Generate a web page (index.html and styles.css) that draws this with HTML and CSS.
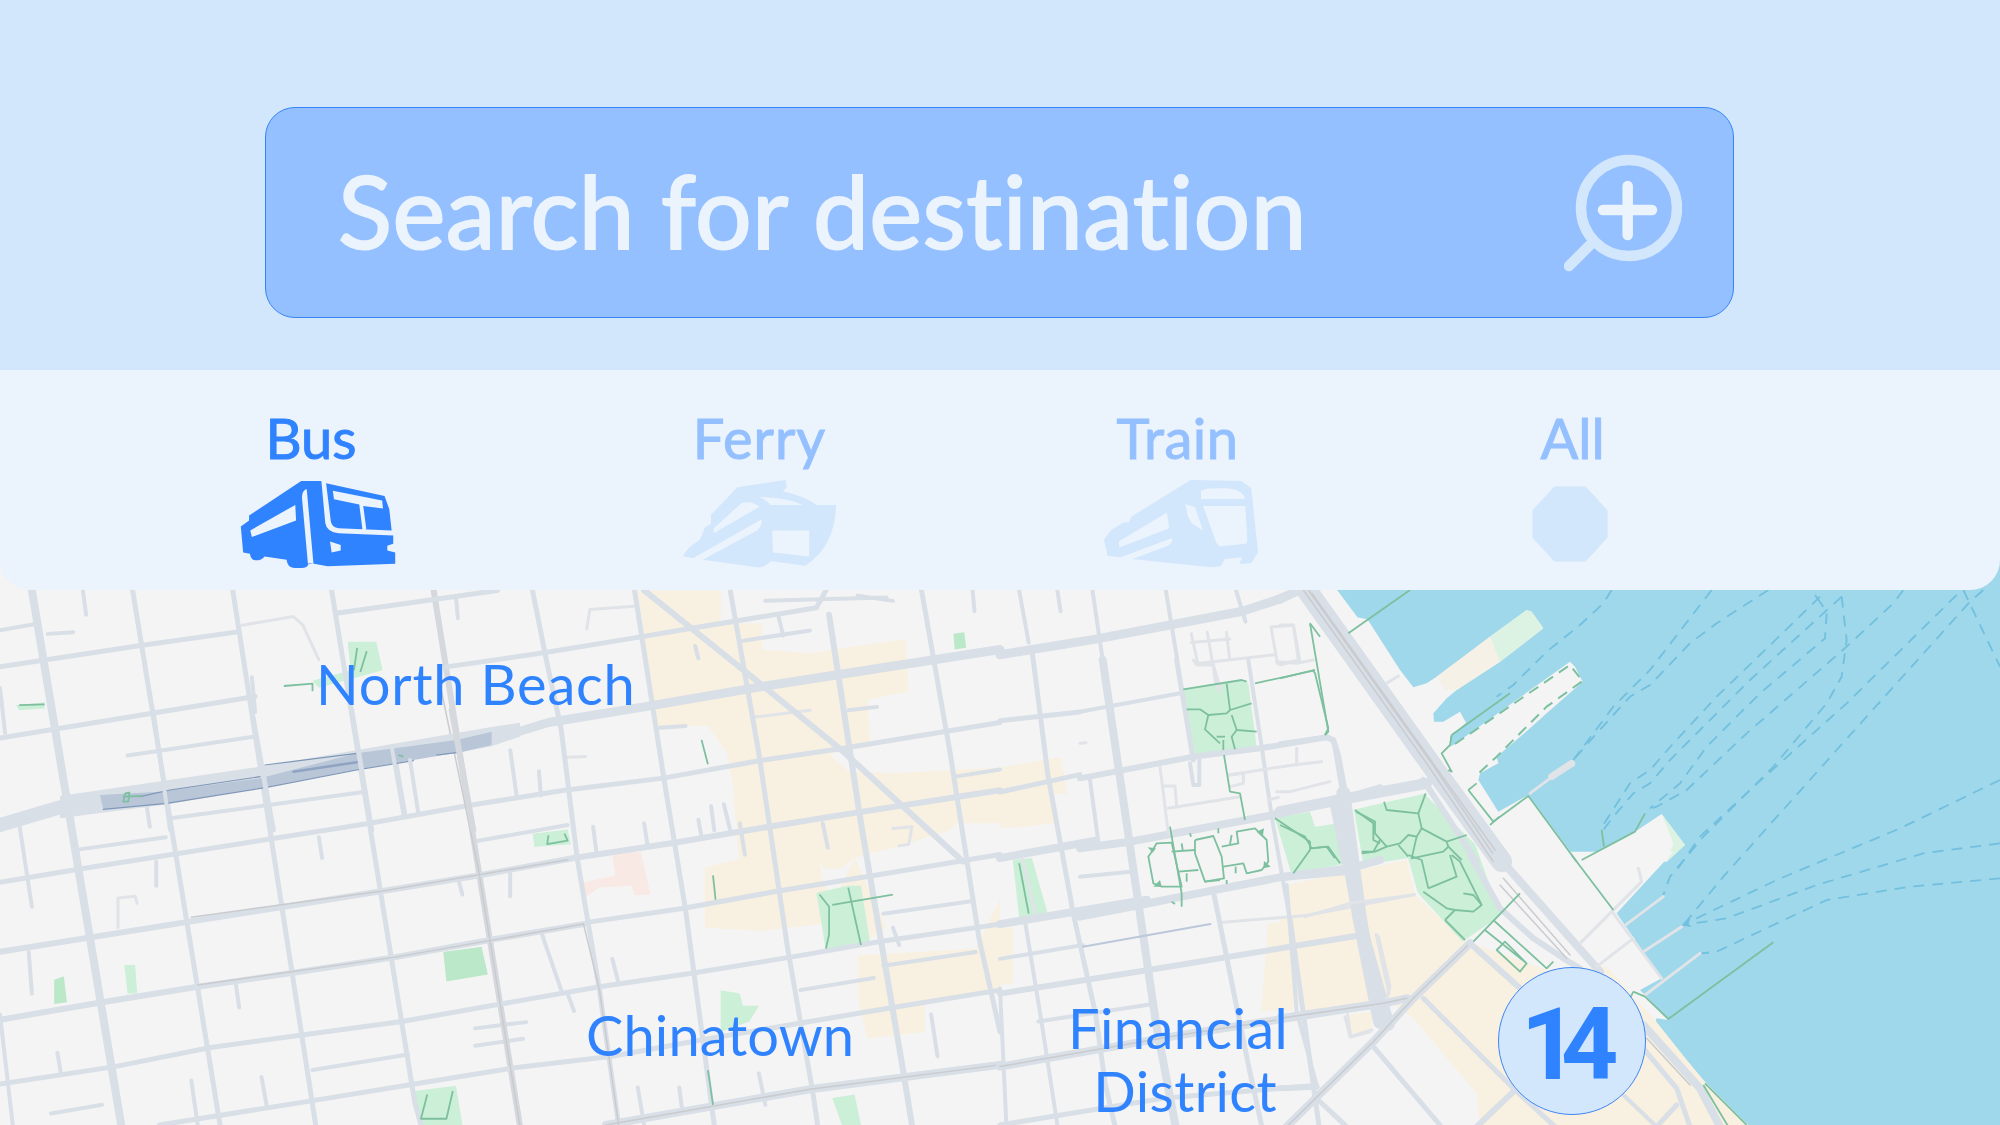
FILE: index.html
```html
<!DOCTYPE html>
<html lang="en">
<head>
<meta charset="utf-8">
<title>Search for destination</title>
<link rel="stylesheet" href="styles.css">
</head>
<body>
<div class="page">
  <header class="top">
    <div class="search">
      <span class="search-text">Search for destination</span>
      <svg class="search-icon" viewBox="1564 150 118 122" width="118" height="122">
        <circle class="lens" cx="1629" cy="206" r="48"/>
        <path class="lens" d="M1590 243L1569 264"/>
        <path class="plus" d="M1627.7 184V233M1603 208H1652"/>
      </svg>
    </div>
  </header>
  <nav class="tabs">
    <div class="tab tab-bus active">
      <span class="tab-label">Bus</span>
      <svg class="tab-icon" width="156" height="88" viewBox="50 240 395 265" preserveAspectRatio="none">
        <path fill-rule="evenodd" d="M205 243H256L266 370Q270 397 300 400L438 407V432L423 438V452L443 458V492L272 500L237 492L224 490Q223 505 205 505H187Q170 503 168 480L112 470Q105 482 90 482Q78 482 75 462L58 458L52 380L73 362V347ZM190 315L192 362L80 412L76 392ZM217 268Q206 275 207 295L222 492H236L219 268ZM278 425L305 436V452L282 458Z"/>
        <path fill-rule="evenodd" d="M268 250L416 288L428 328L434 392L300 385Q283 383 280 365ZM285 272L410 302L412 326L362 318L370 390L360 388L352 314L288 298Z"/>
      </svg>
    </div>
    <div class="tab tab-ferry">
      <span class="tab-label">Ferry</span>
      <svg class="tab-icon" width="153" height="88" viewBox="1172 240 388 265" preserveAspectRatio="none">
        <path fill-rule="evenodd" d="M1310 262L1432 240L1435 262L1425 275Q1480 288 1510 315H1560Q1558 440 1482 498L1395 484Q1380 505 1360 503L1222 480L1360 392Q1372 380 1372 358L1198 475L1172 470Q1180 445 1215 420L1228 382L1243 372V345ZM1250 385L1320 310Q1340 300 1367 320L1250 400ZM1365 292Q1430 290 1475 315H1393Q1385 300 1365 292ZM1398 392H1492V470L1400 458Z"/>
      </svg>
    </div>
    <div class="tab tab-train">
      <span class="tab-label">Train</span>
      <svg class="tab-icon" width="154" height="88" viewBox="113 240 389 265" preserveAspectRatio="none">
        <path fill-rule="evenodd" d="M332 240L460 243L485 265L502 458L485 490L455 493L462 473L418 478L408 500L382 503L185 478L275 438Q287 430 285 415L155 473L122 468L113 420L130 392L162 368L175 368L183 350ZM272 338L278 385L152 443L150 425ZM318 312L343 322L363 392L335 370L325 350ZM358 272Q370 263 420 265Q460 265 470 297H358ZM363 318H470L475 425L472 432L405 440L397 430Z"/>
      </svg>
    </div>
    <div class="tab tab-all">
      <span class="tab-label">All</span>
      <svg class="tab-icon" width="76" height="76" viewBox="0 0 76 76">
        <path class="octagon" d="M23 2H53L74 25V51L53 74H23L2 51V25Z"/>
      </svg>
    </div>
  </nav>
  <main class="map">
    <svg class="map-art" viewBox="0 560 2000 565" width="2000" height="565">
      <rect class="water" x="0" y="560" width="2000" height="565"/>
      <polygon class="land" points="0,560 1317,560 1337,590 1357,617 1400,680 1460,790 1500,860 1500,1125 0,1125"/>
      <g transform="translate(1280 590) scale(.33333)">
        <polygon class="land" points="100,0 170,0 232,82 262,88 270,100 360,240 400,292 440,280 470,260 630,140 740,60 755,65 790,115 660,215 530,300 500,325 460,370 462,395 490,395 540,365 558,398 510,440 510,470 525,462 870,215 885,230 908,275 800,370 750,415 650,500 655,520 600,550 595,570 655,665 745,615 890,810 905,810 1065,725 1145,672 1215,765 1160,815 700,815 0,815 0,0"/>
        <polygon class="pier-tan" points="470,260 630,140 660,215 530,300 495,300"/>
        <polygon class="pier-green" points="630,140 740,60 755,65 790,115 660,215"/>
        <polygon class="pier-green" points="1145,672 1215,765 1160,815 1180,760"/>
      </g>
      <g transform="translate(1280 855) scale(.33333)">
        <polygon class="land" points="500,-10 1180,-10 1010,175 1145,370 1080,405 1095,420 1165,495 1130,490 1125,505 1275,680 1410,815 500,815"/>
        <polygon class="tan" points="20,90 380,15 405,120 550,255 800,345 980,335 1125,495 1280,690 1400,815 600,815 590,715 400,490 330,440 70,470 30,300"/>
        <polygon class="tan" points="0,190 30,190 60,450 0,470"/>
        <polygon class="tan" points="200,480 275,470 275,520 210,545"/>
      </g>
      <g transform="translate(0 580) scale(.63776 .34758)">
        <polygon class="tan" points="1000,30 1130,30 1130,125 1195,125 1195,200 1270,210 1420,170 1425,320 1360,345 1365,480 1300,500 1330,550 1400,555 1568,540 1568,700 1500,700 1490,720 1400,770 1340,800 1320,830 1290,830 1280,760 1170,800 1120,820 1105,830 1105,1000 1190,1010 1290,990 1340,800 1390,1000 1340,1060 1290,860 1280,760 1170,750 1150,600 1140,500 1110,420 1030,420"/>
        <polygon class="tan" points="1345,1080 1530,1060 1568,920 1568,1180 1450,1220 1450,1300 1360,1320 1345,1200"/>
        <polygon class="tan" points="1150,620 1300,560 1340,800 1160,830"/>
        <polygon class="pink" points="960,790 1005,782 1020,905 995,908 990,880 940,885 915,915 915,870 965,850"/>
        <polygon class="park" points="545,178 590,178 600,260 500,310 490,290 550,260"/>
        <polygon class="park-strong" points="695,1070 755,1055 765,1135 700,1155"/>
        <polygon class="park" points="195,1108 212,1108 215,1190 200,1190"/>
        <polygon class="park-strong" points="85,1150 100,1140 105,1215 85,1220"/>
        <polygon class="park" points="25,360 70,352 70,370 30,375"/>
        <polygon class="park-strong" points="1495,155 1512,150 1515,195 1497,200"/>
        <polygon class="park" points="835,730 890,718 895,760 838,768"/>
        <polygon class="park" points="1280,900 1330,880 1350,880 1365,1050 1295,1065"/>
        <polygon class="park" points="1130,1180 1160,1190 1165,1225 1190,1225 1175,1270 1130,1300"/>
        <polygon class="park" points="650,1470 715,1455 725,1568 660,1568"/>
        <polygon class="park" points="1305,1490 1340,1480 1350,1568 1320,1568"/>
      </g>
      <g transform="translate(1000 580) scale(.63776 .34758)">
        <polygon class="tan" points="0,540 95,510 105,615 85,615 85,700 30,712 0,712"/>
        <polygon class="tan" points="420,990 450,980 460,1240 410,1240"/>
        <polygon class="tan" points="0,1000 20,1000 20,1160 0,1165"/>
        <polygon class="park" points="555,660 665,615 745,760 785,965 725,1040 655,900 640,800 570,820"/>
        <polygon class="park" points="20,805 50,800 75,960 30,970"/>
      </g>
      <g transform="translate(1080 660) scale(.33333)">
        <polygon class="park" points="310,88 485,60 505,70 530,260 345,285"/>
        <polygon class="park" points="585,475 690,455 705,500 775,490 800,610 635,645"/>
      </g>

      <g class="roads" transform="translate(0 580) scale(.63776 .34758)">
        <polyline class="r5" points="130,30 135,100"/><polyline class="r5" points="715,50 718,110"/>
        <polyline class="r5" points="395,280 400,380"/><polyline class="r5" points="230,650 235,710"/>
        <polyline class="r5" points="800,490 810,620"/><polyline class="r5" points="845,550 848,620"/>
        <polyline class="r5" points="620,510 635,670"/><polyline class="r5" points="1095,690 1100,740"/>
        <polyline class="r5" points="30,700 50,940"/><polyline class="r5" points="45,1070 50,1190"/>
        <polyline class="r5" points="245,810 245,880"/><polyline class="r5" points="500,740 505,800"/>
        <polyline class="r5" points="370,1165 375,1230"/><polyline class="r5" points="720,870 725,905"/>
        <polyline class="r5" points="800,840 800,910"/><polyline class="r5" points="850,1020 880,1180"/>
        <polyline class="r5" points="960,1090 970,1160"/><polyline class="r5" points="90,1360 95,1415"/>
        <polyline class="r5" points="1010,700 1015,760"/><polyline class="r5" points="930,710 935,780"/>
        <polyline class="r5" points="1115,650 1120,720"/><polyline class="r5" points="1135,645 1145,720"/>
        <polyline class="r5" points="1160,700 1168,790"/><polyline class="r5" points="1290,700 1298,770"/>
        <polyline class="r5" points="1400,1000 1410,1050"/><polyline class="r5" points="1525,30 1528,90"/>
        <polyline class="r5" points="1400,60 1345,45"/><polyline class="r5" points="1090,190 1095,225"/>
        <polyline class="r5" points="1220,100 1228,160"/><polyline class="r5" points="300,1440 310,1568"/>
        <polyline class="r5" points="410,1430 418,1510"/><polyline class="r5" points="1000,1460 1010,1568"/>
        <polyline class="r5" points="1065,1460 1070,1530"/><polyline class="r5" points="1190,1420 1200,1510"/>
        <polyline class="r5" points="1460,1250 1470,1370"/><polyline class="r5" points="890,1190 900,1240"/>
        <polyline class="r5" points="0,310 8,440"/><polyline class="r5" points="0,1250 20,1568"/>
        <polyline class="r5" points="125,775 260,740"/><polyline class="r5" points="270,685 570,610"/>
        <polyline class="r5" points="200,505 400,450"/><polyline class="r5" points="750,750 890,705"/>
        <polyline class="r5" points="490,1410 640,1365"/><polyline class="r5" points="745,1290 825,1272"/>
        <polyline class="r5" points="745,1340 820,1320"/><polyline class="r5" points="80,1535 160,1510"/>
        <polyline class="r5" points="0,145 60,125"/><polyline class="r5" points="75,155 115,150"/>
        <polyline class="r5" points="1165,175 1270,145"/><polyline class="r5" points="1200,60 1390,50"/>
        <polyline class="r5" points="1035,425 1075,420"/><polyline class="r5" points="1330,375 1375,365"/>
        <polyline class="r5" points="1500,565 1568,545"/><polyline class="r5" points="1385,960 1520,925"/>
        <polyline class="r5" points="1385,1110 1530,1070"/><polyline class="r5" points="1255,1180 1370,1145"/>
        <polyline class="lt" points="380,130 460,105 475,130 500,230"/><polyline class="lt" points="890,510 918,508"/>
        <polyline class="lt" points="920,140 925,85 1000,75"/><polyline class="lt" points="185,1000 185,915 212,910 215,930"/>
        <polyline class="lt" points="1180,395 1270,375"/><polyline class="lt" points="1400,715 1430,710 1425,760 1410,765"/>

        <polyline class="r6" points="208,30 345,1568"/><polyline class="r6" points="365,30 495,1568"/>
        <polyline class="r6" points="520,30 650,1500 660,1568"/><polyline class="r6" points="835,30 855,215 880,430 905,800 940,1180 970,1568"/>
        <polyline class="r6" points="995,30 1040,560 1075,950 1115,1500 1120,1568"/><polyline class="r6" points="1145,30 1190,500 1235,1060 1275,1480 1282,1568"/>
        <polyline class="r6" points="1445,30 1490,500 1535,1030 1568,1300"/>
        <polyline class="r7" points="1300,100 1350,700 1415,1400 1430,1568"/>
        <polyline class="rg" points="680,30 750,830 815,1568"/>
        <polyline class="r8" points="50,30 190,1568"/>
        <polyline class="r6" points="0,250 215,190 370,150"/><polyline class="r6" points="530,95 780,30"/>
        <polyline class="r6" points="700,250 850,210 1000,165 1080,140 1280,80 1295,30"/><polyline class="r6" points="0,455 400,335"/>
        <polyline class="r9" points="815,435 860,410 1010,365 1200,305 1568,200"/>
        <polyline class="r6" points="0,870 130,830 580,700 730,650 885,605 1040,570 1190,520 1320,485 1568,410"/>
        <polyline class="r7" points="0,1070 290,985 445,940 600,895 750,850 900,800 1060,755 1205,710 1340,670 1568,605"/>
        <polyline class="r7" points="0,1265 160,1215 310,1170 460,1130 620,1085 770,1035 915,990"/>
        <polyline class="r6" points="920,985 1070,945 1220,895 1370,850 1568,790"/>
        <polyline class="r6" points="0,1450 180,1400 330,1345 630,1270 785,1220 940,1170 1090,1130 1240,1085 1380,1040 1568,990"/>
        <polyline class="r6" points="250,1568 500,1495 650,1450 800,1405 960,1370 1110,1320 1270,1270 1400,1230 1568,1180"/>
        <polyline class="r8" points="950,1568 1270,1465 1568,1395"/>
        <polyline class="core" points="950,1568 1270,1465 1568,1395"/>
        <polyline class="core" points="300,970 600,895 890,805"/>
        <polyline class="core" points="310,1165 620,1085 915,990"/>
        <polyline class="core" points="690,300 750,830 815,1568"/>
        <polyline class="core" points="915,990 940,1180 970,1568"/>
        <polyline class="r7" points="1010,30 1200,310 1320,490 1510,810"/>
      </g>
      <g class="roads" transform="translate(60 710) scale(.33333)">
        <polyline class="r12" points="-180,345 0,292"/>
        <polygon class="road-fill" points="0,258 600,170 1290,52 1380,38 1380,80 1290,110 1050,150 620,230 330,282 0,325"/>
        <polygon class="rail" points="120,255 300,245 600,205 890,130 1190,90 1295,65 1295,105 1210,125 1060,150 890,180 620,230 320,280 130,298"/>
        <polyline class="rail-line" points="240,260 330,240 600,200"/>
        <polyline class="rail-line" points="130,298 320,280 620,232 890,180 1060,152"/>
        <polyline class="rail-line" points="615,165 890,130"/>
        <polyline class="rail-thick" points="700,185 900,155"/>
        <polyline class="rail-line" points="1130,135 1190,128"/>
        <polyline class="r5" points="280,0 330,360"/><polyline class="r6" points="575,0 640,360"/><polyline class="r6" points="875,0 935,360"/>
        <polyline class="rg" points="1175,0 1240,360"/>
        <polyline class="r5" points="995,110 1030,310"/><polyline class="r5" points="1050,150 1075,310"/>
      </g>
      <g class="roads" transform="translate(1000 580) scale(.63776 .34758)">
        <polyline class="r5" points="30,30 45,180"/><polyline class="r5" points="90,30 95,90"/>
        <polyline class="r5" points="145,30 161,230"/><polyline class="r5" points="260,30 278,230"/><polyline class="r5" points="370,30 385,120"/>
        <polyline class="r6" points="50,200 75,560 115,960 150,1250 165,1450 180,1568"/>
        <polyline class="r5" points="0,1175 10,1568"/><polyline class="r5" points="40,990 65,1270 90,1568"/>
        <polyline class="r8" points="161,230 245,1280 275,1568"/>
        <polyline class="r6" points="335,900 390,1400 410,1568"/><polyline class="r6" points="455,978 500,1568"/>
        <polyline class="r11" points="564,978 610,1280"/>
        <polyline class="r9" points="0,215 150,170 380,90 430,60 470,30"/>
        <polyline class="r6" points="0,405 125,380"/><polyline class="r6" points="0,610 125,560"/>
        <polyline class="r8" points="0,800 150,750"/><polyline class="r8" points="0,990 230,920"/>
        <polyline class="r7" points="0,1190 240,1120 555,1025"/><polyline class="r5" points="0,1090 130,1050"/>
        <polyline class="r8" points="0,1400 280,1310 610,1215"/><polyline class="core" points="0,1400 280,1310 610,1215"/>
        <polyline class="r6" points="0,1568 260,1490 490,1455"/><polyline class="r5" points="60,1270 240,1220"/>
        <polyline class="lt" points="350,985 480,965 650,905"/><polyline class="lt" points="590,1020 610,1190"/>
        <polyline class="lt" points="545,1250 550,1315 580,1300"/><polyline class="lt" points="35,800 55,960"/>
        <polyline class="slate" points="130,1055 330,990"/>
        <polyline class="lt" points="300,155 310,240 430,215"/><polyline class="lt" points="325,150 333,235 345,310"/>
        <polyline class="lt" points="355,150 360,225"/><polyline class="lt" points="300,180 360,170"/>
        <polyline class="lt" points="425,135 460,130 470,232 435,240 425,135"/>
      </g>
      <g class="roads" transform="translate(1080 660) scale(.33333)">
        <polyline class="r5" points="30,360 55,545"/>
        <polyline class="r6" points="290,0 340,300"/>
        <polyline class="r5" points="505,0 545,260 575,470 630,780"/>
        <polyline class="r5" points="0,155 300,100"/>
        <polyline class="r7" points="0,355 340,290 540,265 740,232 760,240 775,290 795,400"/>
        <polyline class="r8" points="0,565 150,545 580,465 780,420 900,385"/>
        <polyline class="r5" points="0,650 150,635"/>
        <polyline class="r8" points="0,770 180,735 380,695 610,650 810,625 900,600"/>
        <polyline class="r5" points="330,310 340,375 358,375 358,300"/>
        <polyline class="r12" points="790,400 840,780"/>
        <polyline class="lt" points="240,320 265,520"/><polyline class="lt" points="255,378 285,378 290,440"/>
        <polyline class="lt" points="265,445 480,410"/><polyline class="lt" points="450,345 490,340 490,370 450,380"/>
        <polyline class="lt" points="445,345 640,315 725,305"/><polyline class="lt" points="650,265 650,315"/>
        <polyline class="lt" points="590,395 630,395 750,365"/><polyline class="lt" points="565,420 595,412"/>
        <polyline class="lt" points="340,0 350,15 400,15 405,60 420,95"/><polyline class="lt" points="590,5 650,10 700,0"/>
        <polyline class="lt" points="0,250 18,248"/>
      </g>
      <g class="roads" transform="translate(1280 590) scale(.33333)">
        <polyline class="r20" points="80,0 465,540 665,815"/>
        <polyline class="core" points="70,0 440,520 640,815"/><polyline class="core" points="85,0 455,520 655,815"/><polyline class="core" points="96,10 470,535 670,815"/>
        <polyline class="r7" points="430,570 590,815"/>
        <polyline class="r11" points="0,665 200,625 440,580"/>
        <polyline class="r5" points="0,460 140,440 160,450 185,600"/>
        <polyline class="r12" points="170,640 205,815"/>
        <polyline class="r8" points="0,30 45,5"/>
        <polyline class="lt" points="0,105 40,105 55,210 0,225"/><polyline class="lt" points="320,280 355,258"/>
        <polyline class="lt" points="750,610 810,565 880,525"/><polyline class="wide-lt" points="815,560 875,520"/>
      </g>
      <g class="roads" transform="translate(1280 855) scale(.33333)">
        <polyline class="r5" points="20,90 50,470 110,690"/>
        <polyline class="r12" points="205,0 250,250 300,500"/>
        <polyline class="r7" points="0,70 210,50"/><polyline class="r5" points="0,280 230,245"/>
        <polyline class="r8" points="0,490 310,445 380,430"/><polyline class="core" points="0,490 310,445 380,430"/>
        <polyline class="r7" points="0,700 110,695"/>
        <polyline class="r8" points="570,265 400,430 280,560 20,815"/><polyline class="core" points="570,265 400,430 280,560 20,815"/>
        <polyline class="r7" points="570,265 720,400"/>
        <polyline class="r6" points="430,430 700,700 825,815"/><polyline class="r6" points="280,575 480,810"/>
        <polyline class="r7" points="700,710 590,815"/><polyline class="r6" points="120,740 200,815"/>
        <polyline class="r7" points="570,0 660,160 760,250 850,310 900,340"/>
        <polyline class="r8" points="650,0 960,350"/><polyline class="core" points="660,90 860,310"/><polyline class="core" points="670,70 870,300"/>
        <polyline class="r8" points="1090,510 1260,700 1320,815"/><polyline class="r6" points="1090,580 1190,700 1230,815"/>
        <polyline class="core" points="1100,550 1230,690"/><polyline class="r6" points="1190,750 1130,815"/><polyline class="r5" points="1030,720 1130,815"/>
        <polyline class="lt" points="1075,40 1085,80 900,265"/><polyline class="lt" points="950,335 1060,250"/>
        <polyline class="lt" points="1000,175 1145,370"/><polyline class="lt" points="1030,215 1150,125"/>
        <polyline class="lt" points="1090,290 1205,215"/><polyline class="lt" points="1095,420 1260,295"/>
        <polyline class="lt" points="195,485 210,545 275,525"/><polyline class="lt" points="295,245 330,395 320,430"/>
        <polyline class="lt" points="75,185 210,145 400,120"/>
      </g>

      <g class="paths" transform="translate(60 710) scale(.33333)">
        <polyline points="195,250 190,275 205,275 208,248 195,250"/><polyline points="190,260 245,258"/>
        <polyline points="1015,135 1030,140"/>
      </g>
      <g class="paths" transform="translate(0 580) scale(.63776 .34758)">
        <polyline points="445,305 490,298 490,320"/><polyline points="560,195 555,260"/><polyline points="575,205 565,265"/>
        <polyline points="30,360 70,358"/><polyline points="860,735 858,760 890,750 885,730"/>
        <polyline points="1285,905 1300,940 1300,1020 1295,1060"/><polyline points="1305,935 1400,905"/><polyline points="1330,885 1350,1050"/>
        <polyline points="670,1480 660,1550 700,1550 710,1470"/><polyline points="1100,460 1110,530"/><polyline points="1118,850 1122,920"/><polyline points="1110,1410 1118,1510"/>
      </g>
      <g class="paths" transform="translate(1000 580) scale(.63776 .34758)">
        <polyline points="30,815 45,960"/>
      </g>
      <g class="paths" transform="translate(1080 660) scale(.33333)">
        <polyline points="310,88 485,60 500,65"/><polyline points="525,70 700,32 705,40 745,205 735,225"/>
        <polyline points="440,70 450,150"/><polyline points="320,148 360,148 385,165 440,160 450,150 515,130"/>
        <polyline points="455,165 470,210 530,215"/><polyline points="385,165 375,208 420,250"/><polyline points="470,210 455,230 465,268"/>
        <polyline points="410,230 435,230"/><polyline points="430,240 430,270"/>
        <polyline points="432,285 450,395 480,400 495,480"/>
        <polyline points="270,500 305,700 305,740"/><polyline points="345,540 400,528 425,590 432,655 375,665 345,580 345,540"/>
        <polyline points="275,575 345,570"/><polyline points="295,635 355,630"/>
        <polyline points="215,575 205,590 220,670 245,680 305,680 275,548 230,550 215,575"/>
        <polyline points="425,560 475,550 470,515 525,505 560,540 565,605 545,630 500,640 490,610 430,620"/>
        <polyline points="375,665 420,660"/><polyline points="455,525 450,552"/><polyline points="305,550 308,570"/><polyline points="320,640 320,665"/><polyline points="467,620 467,640"/>
        <polyline points="330,520 333,530"/><polyline points="415,505 415,520"/><polyline points="440,660 440,672"/><polyline points="275,725 285,732"/>
        <polygon class="knob" points="203,562 228,565 218,578"/><polygon class="knob" points="530,515 552,505 548,532"/><polygon class="knob" points="550,625 572,620 552,603"/><polygon class="knob" points="220,680 240,660 245,680"/>
        <polyline points="585,475 690,545 690,570 640,640"/><polyline points="690,565 745,560 780,610"/>
        <polyline points="825,450 880,490 880,540 900,550"/><polyline points="845,575 880,575 900,540"/>
      </g>
      <g class="paths" transform="translate(1280 590) scale(.33333)">
        <polyline points="205,130 390,0"/>
        <polyline points="90,100 120,140"/><polyline points="0,265 105,240"/>
        <polyline points="90,100 145,425 135,435"/>
        <polyline points="515,435 690,310"/><polyline points="515,435 510,465 485,490 515,545 505,540"/><polyline points="565,600 590,580"/>
        <polyline points="565,600 640,695 745,618 890,815"/><polyline points="630,705 658,680"/>
        <polyline points="905,810 1065,725 1095,670"/><polyline points="965,720 972,770"/>
        <polyline class="dash-green" points="525,462 870,225 905,270"/>
        <polyline class="dash-green" points="905,275 800,350 650,500 590,555"/>
        <polyline points="228,665 285,695 285,730 320,770 360,760 385,735 410,740 425,715 415,670 320,660 312,635"/>
        <polyline points="415,670 437,610"/><polyline points="425,715 500,755 505,770 490,785 395,805 410,740"/>
        <polyline points="0,705 75,740 95,775 140,770 165,805"/><polyline points="245,790 285,785 320,770"/>
        <polyline points="500,755 560,735"/><polyline points="355,765 385,800"/><polyline points="505,770 545,810"/>
      </g>
      <g class="paths" transform="translate(1280 855) scale(.33333)">
        <polyline points="385,0 425,15 445,100"/><polyline points="445,100 530,65 510,0"/><polyline points="430,110 500,160 525,165 580,170 605,150 540,20 515,0"/>
        <polyline points="495,195 525,165"/><polyline points="495,195 555,255"/><polyline points="550,115 580,120 605,150"/>
        <polyline points="580,260 720,115"/><polyline points="615,225 740,325 720,350 650,285 675,260 740,325"/>
        <polyline points="640,195 800,340 820,320"/>
        <polyline points="875,0 1000,165"/>
        <polyline points="1060,410 1095,425 1165,492 1480,262"/><polyline points="1060,410 1050,430"/>
        <polyline points="1275,685 1400,810"/><polyline points="1270,690 1345,815"/>
      </g>

      <g class="ferries" transform="translate(1650 590) scale(.33333)">
        <polyline points="-115,0 -140,40 -210,105 -310,185 -410,285 -460,320"/>
        <polyline points="185,0 0,240 -110,350 -230,510"/>
        <polyline points="355,0 200,100 120,160 0,285 -60,320 -160,430 -230,510"/>
        <polyline points="510,20 340,185 200,320 70,460 0,540 -60,580 -150,720"/>
        <polyline points="575,20 300,270 170,400 60,510 0,580 -50,610 -110,680 -140,720"/>
        <polyline points="530,70 525,145 330,310 170,470 90,580 0,655"/>
        <polyline points="760,0 730,40 590,170 290,430 110,600 20,650 -10,660"/>
        <polyline points="575,20 590,150 575,260 530,340 370,530 160,740 60,860 40,915"/>
        <polyline points="920,15 590,340 300,600 150,740 70,855"/>
        <polyline points="1000,0 960,35 560,480 220,860 100,1005"/>
        <polyline points="940,0 1050,230"/>
        <polyline class="solid" points="495,15 520,50"/>
        <polyline points="1050,570 750,715 380,870 150,980 100,1005"/>
        <polyline points="1050,760 820,790 500,885 230,985 100,1005"/>
        <polyline points="1050,865 780,890 530,930 200,1085 155,1090"/>
        <polyline class="solid" points="120,988 100,1004 122,1008"/>
      </g>
    </svg>
    <span class="place place-north">North Beach</span>
    <span class="place place-china">Chinatown</span>
    <span class="place place-fin">Financial<span class="place-second">District</span></span>
    <div class="badge">14</div>
  </main>
</div>
</body>
</html>
```
FILE: styles.css
```css
* { box-sizing: border-box; }
html, body { margin: 0; padding: 0; }
body { width: 2000px; height: 1125px; overflow: hidden; font-family: "Lato", "Roboto", "Liberation Sans", sans-serif; font-variant-ligatures: none; }

.page { display: flex; flex-direction: column; width: 2000px; height: 1125px; background: #d2e6fc; }

.top { height: 370px; padding: 107px 266px 52px 265px; }
.search {
  display: flex; align-items: center; justify-content: space-between;
  height: 211px; padding: 0 51px 0 72px;
  background: #95c0ff; border: 1px solid #3585f8; border-radius: 30px;
}
.search-text { margin-bottom: 6px; font-size: 100px; font-weight: 400; color: #ebf3fd; line-height: 1; letter-spacing: .45px; -webkit-text-stroke: 2px #ebf3fd; }
.search-icon { display: block; }
.lens { fill: none; stroke: #d2e6fc; stroke-width: 10.5; stroke-linecap: round; }
.plus { fill: none; stroke: #ebf3fd; stroke-width: 10.5; stroke-linecap: round; }

.tabs {
  position: relative; z-index: 2; display: flex; height: 220px; margin-bottom: -30px;
  padding: 35px 0 0 240px; background: #ebf3fd; border-radius: 0 0 30px 30px;
}
.tab { display: flex; flex-direction: column; align-items: center; color: #95c0ff; fill: #d2e6fc; }
.tab.active { color: #3083ff; fill: #3083ff; }
.tab-ferry { margin-left: 287px; }
.tab-train { margin-left: 268px; }
.tab-all { margin-left: 274px; }
.tab-label { font-size: 56px; font-weight: 400; line-height: 66px; -webkit-text-stroke: 1px currentColor; }
.tab-bus .tab-label { margin-right: 14px; }
.tab-ferry .tab-label { letter-spacing: 1px; }
.tab-train .tab-label { margin-right: 7px; letter-spacing: .5px; }
.tab-all .tab-label { margin-left: 5px; }
.tab-icon { display: block; margin-top: 9px; }
.tab-all .tab-icon { margin-top: 15px; }
.octagon { stroke: #d2e6fc; stroke-width: 3; stroke-linejoin: round; }

.map { position: relative; flex: 1; overflow: hidden; background: #f5f4f5; }
.map-art { display: block; }
.map-art * { vector-effect: non-scaling-stroke; }
.water { fill: #9fd8ea; }
.land { fill: #f5f4f5; }
.tan { fill: #f8f0e0; }
.pink { fill: #f9e9e4; }
.park { fill: #ccefd8; }
.park-strong { fill: #bae8c9; }
.pier-tan { fill: #f5f1e6; }
.pier-green { fill: #dcf3e4; }
.road-fill { fill: #d8dfe6; }

.roads polyline { fill: none; stroke: #d8dfe6; stroke-linejoin: round; stroke-linecap: round; }
.roads .r5 { stroke-width: 4; }
.roads .r6 { stroke-width: 5; }
.roads .r7 { stroke-width: 6; }
.roads .r8 { stroke-width: 8; }
.roads .r9 { stroke-width: 9; }
.roads .r11 { stroke-width: 11; }
.roads .r12 { stroke-width: 14; }
.roads .r20 { stroke-width: 21; }
.roads .rg { stroke-width: 6; stroke: #d5d9de; }
.roads .lt { stroke-width: 3; stroke: #e0e3e7; }
.roads .wide-lt { stroke-width: 7; stroke: #e0e3e7; }
.roads .core { stroke-width: 1.5; stroke: #c9cbcf; }
.roads .slate { stroke-width: 2; stroke: #bcc8da; }
.rail { fill: #b8c6d8; }
.roads .rail-line { stroke-width: 1.2; stroke: #7f97b8; }
.roads .rail-thick { stroke-width: 2.5; stroke: #8fa4c2; }

.paths polyline { fill: none; stroke: #7dc09f; stroke-width: 1.8; stroke-linejoin: round; }
.paths .knob { fill: #7dc09f; }
.paths .dash-green { stroke-dasharray: 11 7; stroke-width: 2; }

.ferries polyline { fill: none; stroke: #72bfde; stroke-width: 1.8; stroke-dasharray: 11 8; }
.ferries .solid { stroke-dasharray: none; }

.place { position: absolute; font-size: 56px; font-weight: 400; line-height: 63px; color: #3083ff; white-space: nowrap; text-align: center; letter-spacing: .8px; }
.place-north { left: 316px; top: 92px; }
.place-china { left: 586px; top: 443px; letter-spacing: .1px; }
.place-fin { left: 1068px; top: 436px; letter-spacing: .4px; }
.place-second { display: block; padding-left: 14px; }

.badge {
  position: absolute; left: 1498px; top: 407px; width: 148px; height: 148px;
  display: flex; align-items: center; justify-content: center;
  padding: 6px 22px 0 0;
  border: 1.5px solid #3d86f5; border-radius: 50%;
  background: #d2e6fc; color: #3083ff;
  font-family: "Roboto", "Liberation Sans", sans-serif;
  font-size: 100px; font-weight: 700; letter-spacing: -17px;
}
```
